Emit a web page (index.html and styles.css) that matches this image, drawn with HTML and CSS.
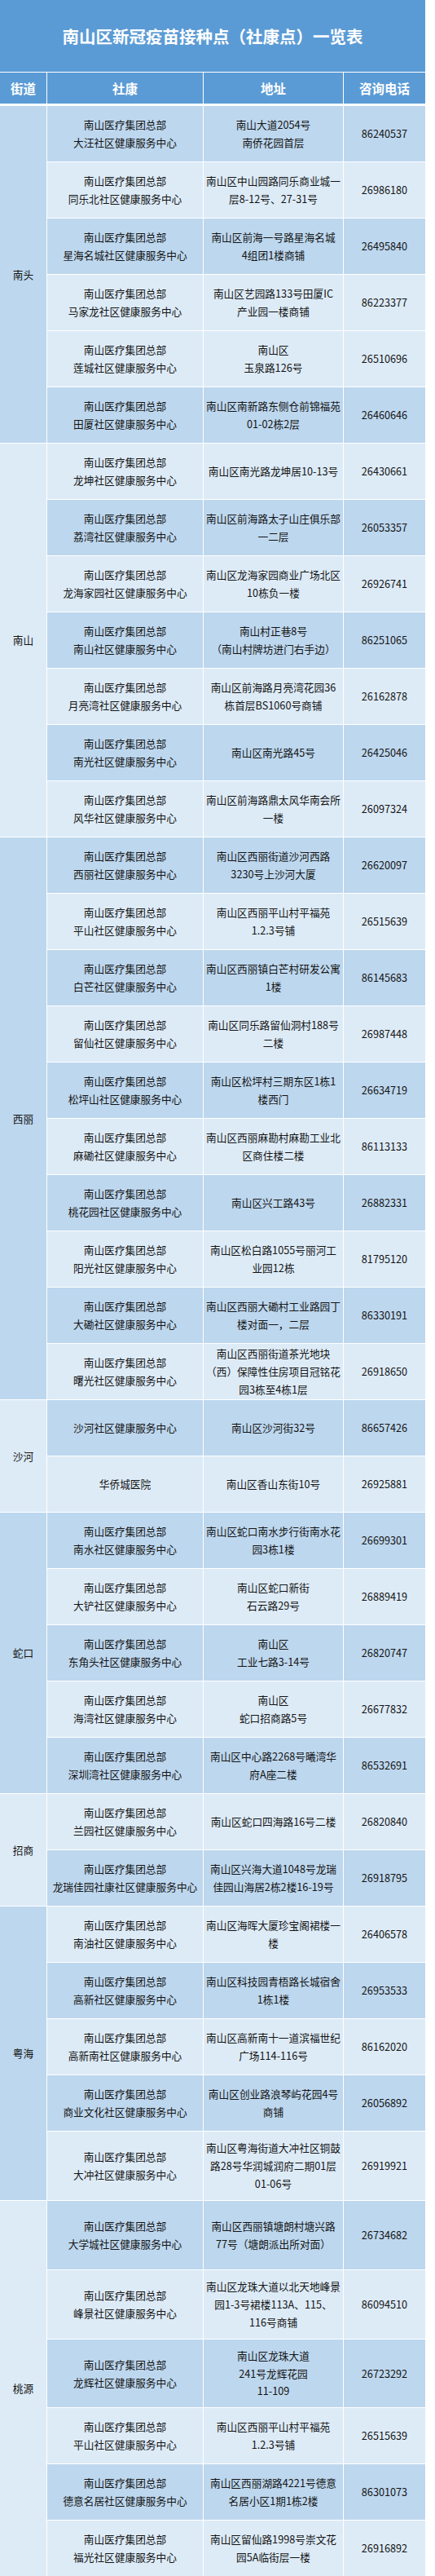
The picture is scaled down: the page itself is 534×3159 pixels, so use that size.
FILE: index.html
```html
<!DOCTYPE html>
<html lang="zh-CN">
<head>
<meta charset="utf-8">
<title>南山区新冠疫苗接种点（社康点）一览表</title>
<link rel="stylesheet" href="styles.css">
</head>
<body>
<table class="sheet">
  <colgroup>
    <col class="c1"><col class="c2"><col class="c3"><col class="c4">
  </colgroup>
  <thead>
    <tr class="title"><th colspan="4">南山区新冠疫苗接种点（社康点）一览表</th></tr>
    <tr class="head"><th>街道</th><th>社康</th><th>地址</th><th class="last">咨询电话</th></tr>
  </thead>
  <tbody>
    <tr class="d"><td class="st d" rowspan="6">南头</td><td>南山医疗集团总部<br>大汪社区健康服务中心</td><td>南山大道2054号<br>南侨花园首层</td><td class="last">86240537</td></tr>
    <tr class="l"><td>南山医疗集团总部<br>同乐北社区健康服务中心</td><td>南山区中山园路同乐商业城一<br>层8-12号、27-31号</td><td class="last">26986180</td></tr>
    <tr class="d"><td>南山医疗集团总部<br>星海名城社区健康服务中心</td><td>南山区前海一号路星海名城<br>4组团1楼商铺</td><td class="last">26495840</td></tr>
    <tr class="l"><td>南山医疗集团总部<br>马家龙社区健康服务中心</td><td>南山区艺园路133号田厦IC<br>产业园一楼商铺</td><td class="last">86223377</td></tr>
    <tr class="l"><td>南山医疗集团总部<br>莲城社区健康服务中心</td><td>南山区<br>玉泉路126号</td><td class="last">26510696</td></tr>
    <tr class="d"><td>南山医疗集团总部<br>田厦社区健康服务中心</td><td>南山区南新路东侧仓前锦福苑<br>01-02栋2层</td><td class="last">26460646</td></tr>

    <tr class="l"><td class="st l" rowspan="7">南山</td><td>南山医疗集团总部<br>龙坤社区健康服务中心</td><td>南山区南光路龙坤居10-13号</td><td class="last">26430661</td></tr>
    <tr class="d"><td>南山医疗集团总部<br>荔湾社区健康服务中心</td><td>南山区前海路太子山庄俱乐部<br>一二层</td><td class="last">26053357</td></tr>
    <tr class="l"><td>南山医疗集团总部<br>龙海家园社区健康服务中心</td><td>南山区龙海家园商业广场北区<br>10栋负一楼</td><td class="last">26926741</td></tr>
    <tr class="d"><td>南山医疗集团总部<br>南山社区健康服务中心</td><td>南山村正巷8号<br>（南山村牌坊进门右手边）</td><td class="last">86251065</td></tr>
    <tr class="l"><td>南山医疗集团总部<br>月亮湾社区健康服务中心</td><td>南山区前海路月亮湾花园36<br>栋首层BS1060号商铺</td><td class="last">26162878</td></tr>
    <tr class="d"><td>南山医疗集团总部<br>南光社区健康服务中心</td><td>南山区南光路45号</td><td class="last">26425046</td></tr>
    <tr class="l"><td>南山医疗集团总部<br>风华社区健康服务中心</td><td>南山区前海路鼎太风华南会所<br>一楼</td><td class="last">26097324</td></tr>

    <tr class="d"><td class="st d" rowspan="10">西丽</td><td>南山医疗集团总部<br>西丽社区健康服务中心</td><td>南山区西丽街道沙河西路<br>3230号上沙河大厦</td><td class="last">26620097</td></tr>
    <tr class="l"><td>南山医疗集团总部<br>平山社区健康服务中心</td><td>南山区西丽平山村平福苑<br>1.2.3号铺</td><td class="last">26515639</td></tr>
    <tr class="d"><td>南山医疗集团总部<br>白芒社区健康服务中心</td><td>南山区西丽镇白芒村研发公寓<br>1楼</td><td class="last">86145683</td></tr>
    <tr class="l"><td>南山医疗集团总部<br>留仙社区健康服务中心</td><td>南山区同乐路留仙洞村188号<br>二楼</td><td class="last">26987448</td></tr>
    <tr class="d"><td>南山医疗集团总部<br>松坪山社区健康服务中心</td><td>南山区松坪村三期东区1栋1<br>楼西门</td><td class="last">26634719</td></tr>
    <tr class="l"><td>南山医疗集团总部<br>麻磡社区健康服务中心</td><td>南山区西丽麻勘村麻勘工业北<br>区商住楼二楼</td><td class="last">86113133</td></tr>
    <tr class="d"><td>南山医疗集团总部<br>桃花园社区健康服务中心</td><td>南山区兴工路43号</td><td class="last">26882331</td></tr>
    <tr class="l"><td>南山医疗集团总部<br>阳光社区健康服务中心</td><td>南山区松白路1055号丽河工<br>业园12栋</td><td class="last">81795120</td></tr>
    <tr class="d"><td>南山医疗集团总部<br>大磡社区健康服务中心</td><td>南山区西丽大磡村工业路园丁<br>楼对面一，二层</td><td class="last">86330191</td></tr>
    <tr class="l"><td>南山医疗集团总部<br>曙光社区健康服务中心</td><td>南山区西丽街道茶光地块<br>（西）保障性住房项目冠铭花<br>园3栋至4栋1层</td><td class="last">26918650</td></tr>

    <tr class="d"><td class="st l" rowspan="2">沙河</td><td>沙河社区健康服务中心</td><td>南山区沙河街32号</td><td class="last">86657426</td></tr>
    <tr class="l"><td>华侨城医院</td><td>南山区香山东街10号</td><td class="last">26925881</td></tr>

    <tr class="d"><td class="st d" rowspan="5">蛇口</td><td>南山医疗集团总部<br>南水社区健康服务中心</td><td>南山区蛇口南水步行街南水花<br>园3栋1楼</td><td class="last">26699301</td></tr>
    <tr class="l"><td>南山医疗集团总部<br>大铲社区健康服务中心</td><td>南山区蛇口新街<br>石云路29号</td><td class="last">26889419</td></tr>
    <tr class="d"><td>南山医疗集团总部<br>东角头社区健康服务中心</td><td>南山区<br>工业七路3-14号</td><td class="last">26820747</td></tr>
    <tr class="l"><td>南山医疗集团总部<br>海湾社区健康服务中心</td><td>南山区<br>蛇口招商路5号</td><td class="last">26677832</td></tr>
    <tr class="d"><td>南山医疗集团总部<br>深圳湾社区健康服务中心</td><td>南山区中心路2268号曦湾华<br>府A座二楼</td><td class="last">86532691</td></tr>

    <tr class="l"><td class="st l" rowspan="2">招商</td><td>南山医疗集团总部<br>兰园社区健康服务中心</td><td>南山区蛇口四海路16号二楼</td><td class="last">26820840</td></tr>
    <tr class="d"><td>南山医疗集团总部<br>龙瑞佳园社康社区健康服务中心</td><td>南山区兴海大道1048号龙瑞<br>佳园山海居2栋2楼16-19号</td><td class="last">26918795</td></tr>

    <tr class="l"><td class="st d" rowspan="5">粤海</td><td>南山医疗集团总部<br>南油社区健康服务中心</td><td>南山区海晖大厦珍宝阁裙楼一<br>楼</td><td class="last">26406578</td></tr>
    <tr class="d"><td>南山医疗集团总部<br>高新社区健康服务中心</td><td>南山区科技园青梧路长城宿舍<br>1栋1楼</td><td class="last">26953533</td></tr>
    <tr class="l"><td>南山医疗集团总部<br>高新南社区健康服务中心</td><td>南山区高新南十一道滨福世纪<br>广场114-116号</td><td class="last">86162020</td></tr>
    <tr class="d"><td>南山医疗集团总部<br>商业文化社区健康服务中心</td><td>南山区创业路浪琴屿花园4号<br>商铺</td><td class="last">26056892</td></tr>
    <tr class="l tall"><td>南山医疗集团总部<br>大冲社区健康服务中心</td><td>南山区粤海街道大冲社区铜鼓<br>路28号华润城润府二期01层<br>01-06号</td><td class="last">26919921</td></tr>

    <tr class="d tall"><td class="st l" rowspan="6">桃源</td><td>南山医疗集团总部<br>大学城社区健康服务中心</td><td>南山区西丽镇塘朗村塘兴路<br>77号（塘朗派出所对面）</td><td class="last">26734682</td></tr>
    <tr class="l tall"><td>南山医疗集团总部<br>峰景社区健康服务中心</td><td>南山区龙珠大道以北天地峰景<br>园1-3号裙楼113A、115、<br>116号商铺</td><td class="last">86094510</td></tr>
    <tr class="d tall2"><td>南山医疗集团总部<br>龙辉社区健康服务中心</td><td>南山区龙珠大道<br>241号龙辉花园<br>11-109</td><td class="last">26723292</td></tr>
    <tr class="l"><td>南山医疗集团总部<br>平山社区健康服务中心</td><td>南山区西丽平山村平福苑<br>1.2.3号铺</td><td class="last">26515639</td></tr>
    <tr class="d"><td>南山医疗集团总部<br>德意名居社区健康服务中心</td><td>南山区西丽湖路4221号德意<br>名居小区1期1栋2楼</td><td class="last">86301073</td></tr>
    <tr class="l"><td>南山医疗集团总部<br>福光社区健康服务中心</td><td>南山区留仙路1998号崇文花<br>园5A临街层一楼</td><td class="last">26916892</td></tr>
  </tbody>
</table>
</body>
</html>
```

FILE: styles.css
```css
html, body {
  margin: 0;
  padding: 0;
  background: #ffffff;
}

body {
  font-family: "Noto Sans CJK SC", "Microsoft YaHei", sans-serif;
  color: #141414;
}

.sheet {
  width: 522px;
  border-collapse: separate;
  border-spacing: 0;
  table-layout: fixed;
}

.c1 { width: 58px; }
.c2 { width: 192px; }
.c3 { width: 172px; }
.c4 { width: 100px; }

.sheet th,
.sheet td {
  padding: 0;
  text-align: center;
  vertical-align: middle;
  white-space: nowrap;
  border-right: 1px solid #ffffff;
  border-bottom: 1px solid #ffffff;
}

.sheet .last {
  border-right: 0;
}

.title th {
  height: 88px;
  background: #5b9bd5;
  color: #ffffff;
  font-size: 20.5px;
  font-weight: bold;
  border-right: 0;
}

.head th {
  height: 38px;
  background: #5b9bd5;
  color: #ffffff;
  font-size: 15.5px;
  font-weight: bold;
  border-bottom: 3px solid #ffffff;
}

.sheet td {
  height: 68px;
  font-size: 12.7px;
  line-height: 21.7px;
}

.sheet tr.tall td {
  height: 84px;
}

.sheet tr.tall2 td {
  height: 83px;
}

tr.d td { background: #bdd7ee; }
tr.l td { background: #ddebf7; }

.sheet td.st.d { background: #bdd7ee; }
.sheet td.st.l { background: #ddebf7; }
```
